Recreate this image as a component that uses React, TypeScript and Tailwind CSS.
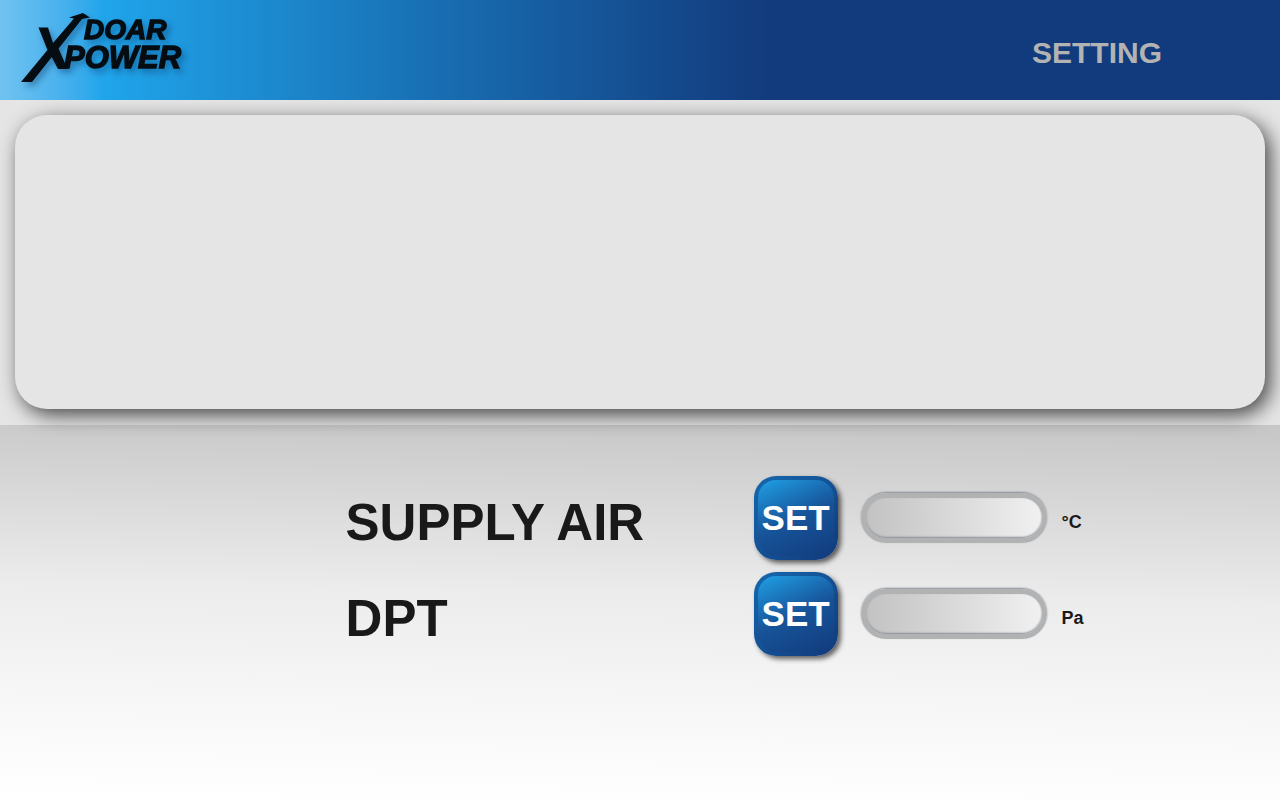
import { useId } from "react";

function Logo() {
  return (
    <svg
      viewBox="0 0 200 100"
      className="h-[100px] w-[200px] shrink-0 drop-shadow-[3px_4px_3px_rgba(5,45,90,0.4)]"
      role="img"
      aria-label="DOAR XPOWER"
    >
      <g fill="#050d13">
        <path d="M21 82 L32 82 L82 19 L90 17.5 L83 13 L69 17.5 L74 18.5 L53 43 L48 27.5 L38.5 27.5 L47.5 50 Z" />
        <path d="M48 50 L57 45 L67.5 69 L58 69 Z" />
        <g
          className="font-['Liberation_Sans',Arial,sans-serif] font-bold italic"
          stroke="#050d13"
          strokeWidth="1.4"
        >
          <text x="84" y="39" fontSize="28">DOAR</text>
          <text x="64" y="68" fontSize="31">POWER</text>
        </g>
      </g>
    </svg>
  );
}

function SettingRow({ label, unit }: { label: string; unit: string }) {
  const id = useId();
  return (
    <div className="grid grid-cols-[408px_84px_188px_auto] items-center">
      <label htmlFor={id} className="pt-2 text-[51px] leading-none font-bold whitespace-nowrap">
        {label}
      </label>
      <button
        type="button"
        aria-label={`SET ${label}`}
        className="size-[84px] rounded-[22px] bg-linear-to-br from-[#1568ae] to-[#123a7b] p-1 shadow-[3px_3px_5px_rgba(0,0,0,0.6)]"
      >
        <span className="flex size-full items-center justify-center rounded-[18px] bg-linear-155 from-[#20a1e6] via-[#17549a] via-50% to-[#123b7d] pb-0.5 text-[35px] leading-none font-bold text-white">
          SET
        </span>
      </button>
      <input
        id={id}
        type="text"
        className="ml-[23px] h-[50px] w-[186px] rounded-full border-[5px] border-[#b1b2b4] bg-linear-to-r from-[#c1c1c1] to-[#f2f2f2] bg-origin-border px-4 text-xl shadow-[0_-1px_2px_#858b93,inset_0_-1px_2px_#858b93] outline-none"
      />
      <span className="ml-9 pt-2 text-lg leading-none font-bold">{unit}</span>
    </div>
  );
}

export default function App() {
  return (
    <div className="flex min-h-screen flex-col overflow-x-hidden bg-white font-['Liberation_Sans',Arial,sans-serif] text-[#191919]">
      <header className="z-10 flex h-[100px] items-center justify-between bg-linear-to-r from-[#70c3f0] via-[#20a5eb] via-8% to-[#123b7d] to-60% pr-[118px]">
        <Logo />
        <h1 className="pt-1.5 text-[30px] leading-none font-bold text-[#b3b3b3]">SETTING</h1>
      </header>
      <div className="flex flex-1 flex-col bg-[linear-gradient(181deg,#c8c8c8_335px,#ececec_505px,#f8f8f8_630px,#ffffff_720px)]">
        <section className="bg-[#e5e5e5] px-[15px] pt-[15px] pb-4">
          <div className="h-[294px] rounded-[32px] bg-[#e5e5e5] shadow-[5px_6px_20px_rgba(0,0,0,0.7)]" />
        </section>
        <main className="flex flex-1 flex-col gap-3 pt-[51px] pl-[27%]">
          <SettingRow label="SUPPLY AIR" unit="°C" />
          <SettingRow label="DPT" unit="Pa" />
        </main>
      </div>
    </div>
  );
}
